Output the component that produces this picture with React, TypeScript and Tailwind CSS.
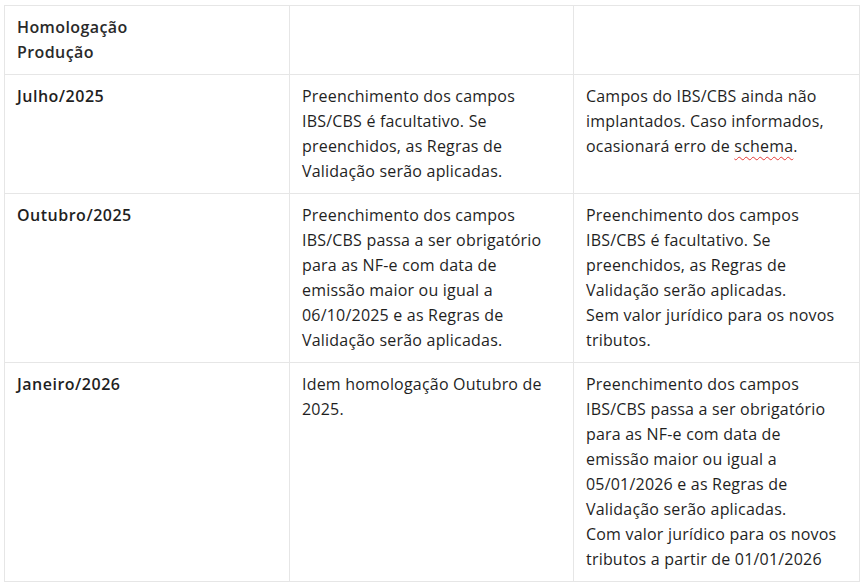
import React from "react";

const Lines = ({ lines }: { lines: React.ReactNode[] }) => (
  <>
    {lines.map((l, i) => (
      <div key={i} className="whitespace-nowrap">
        {l}
      </div>
    ))}
  </>
);

export default function App() {
  const cell = "border border-[#e6e6e6] px-[12px] py-[9px] align-top";
  const body = cell + " tracking-[0.2px]";
  const head = cell + " font-semibold tracking-[0.5px]";
  return (
    <div
      className="bg-white min-h-screen pt-[5px] pl-[4px] text-[16px] leading-[25px] text-[#1f1f1f]"
      style={{ fontFamily: '"Open Sans", "Noto Sans", Arial, sans-serif' }}
    >
      <table className="border-collapse table-fixed w-[855px]">
        <colgroup>
          <col className="w-[285px]" />
          <col className="w-[284px]" />
          <col className="w-[286px]" />
        </colgroup>
        <tbody>
          <tr>
            <td className={cell + " font-semibold tracking-[0.4px] text-[#2a2a2a]"}>
              <Lines lines={["Homologação", "Produção"]} />
            </td>
            <td className={cell}></td>
            <td className={cell}></td>
          </tr>
          <tr>
            <td className={head}>Julho/2025</td>
            <td className={body}>
              <Lines
                lines={[
                  "Preenchimento dos campos",
                  "IBS/CBS é facultativo. Se",
                  "preenchidos, as Regras de",
                  "Validação serão aplicadas.",
                ]}
              />
            </td>
            <td className={body}>
              <Lines
                lines={[
                  "Campos do IBS/CBS ainda não",
                  "implantados. Caso informados,",
                  <>
                    ocasionará erro de{" "}
                    <span className="underline decoration-wavy decoration-[#e53935] decoration-1 underline-offset-[4px]">
                      schema
                    </span>
                    .
                  </>,
                ]}
              />
            </td>
          </tr>
          <tr>
            <td className={head}>Outubro/2025</td>
            <td className={body}>
              <Lines
                lines={[
                  "Preenchimento dos campos",
                  "IBS/CBS passa a ser obrigatório",
                  "para as NF-e com data de",
                  "emissão maior ou igual a",
                  "06/10/2025 e as Regras de",
                  "Validação serão aplicadas.",
                ]}
              />
            </td>
            <td className={body}>
              <Lines
                lines={[
                  "Preenchimento dos campos",
                  "IBS/CBS é facultativo. Se",
                  "preenchidos, as Regras de",
                  "Validação serão aplicadas.",
                  "Sem valor jurídico para os novos",
                  "tributos.",
                ]}
              />
            </td>
          </tr>
          <tr>
            <td className={head}>Janeiro/2026</td>
            <td className={body}>
              <Lines lines={["Idem homologação Outubro de", "2025."]} />
            </td>
            <td className={body}>
              <Lines
                lines={[
                  "Preenchimento dos campos",
                  "IBS/CBS passa a ser obrigatório",
                  "para as NF-e com data de",
                  "emissão maior ou igual a",
                  "05/01/2026 e as Regras de",
                  "Validação serão aplicadas.",
                  "Com valor jurídico para os novos",
                  "tributos a partir de 01/01/2026",
                ]}
              />
            </td>
          </tr>
        </tbody>
      </table>
    </div>
  );
}
